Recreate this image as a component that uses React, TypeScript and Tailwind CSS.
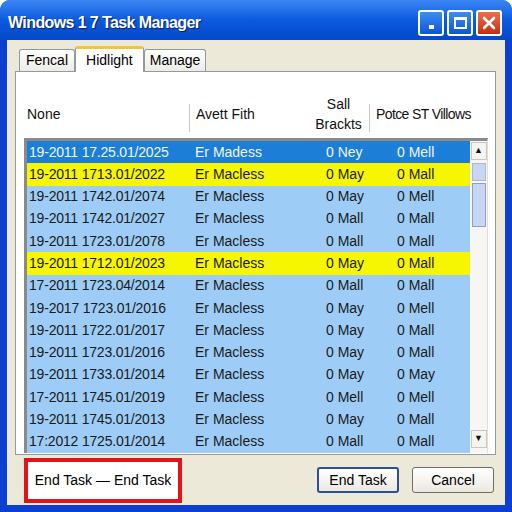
import React from "react"

const rows = [
    { a: "19-2011 17.25.01/2025", c: "0 Ney", d: "0 Mell", kind: "sel" },
    { a: "19-2011 1713.01/2022", c: "0 May", d: "0 Mall", kind: "hi" },
    { a: "19-2011 1742.01/2074", c: "0 May", d: "0 Mell", kind: "" },
    { a: "19-2011 1742.01/2027", c: "0 Mall", d: "0 Mall", kind: "" },
    { a: "19-2011 1723.01/2078", c: "0 Mall", d: "0 Mall", kind: "" },
    { a: "19-2011 1712.01/2023", c: "0 May", d: "0 Mall", kind: "hi" },
    { a: "17-2011 1723.04/2014", c: "0 Mall", d: "0 Mall", kind: "" },
    { a: "19-2017 1723.01/2016", c: "0 May", d: "0 Mell", kind: "" },
    { a: "19-2011 1722.01/2017", c: "0 May", d: "0 Mall", kind: "" },
    { a: "19-2011 1723.01/2016", c: "0 May", d: "0 Mall", kind: "" },
    { a: "19-2011 1733.01/2014", c: "0 May", d: "0 May", kind: "" },
    { a: "17-2011 1745.01/2019", c: "0 Mell", d: "0 Mell", kind: "" },
    { a: "19-2011 1745.01/2013", c: "0 May", d: "0 Mall", kind: "" },
    { a: "17:2012 1725.01/2014", c: "0 Mall", d: "0 Mall", kind: "" },
]

export default function App() {
    return (
        <div className="w-[512px] h-[512px] bg-[#0a3fd0] rounded-t-[10px] flex flex-col overflow-hidden font-['Liberation_Sans',Arial,sans-serif]">
            {/* title bar */}
            <div className="h-[40px] flex items-center pl-[8px] pr-[10px] pt-[6px] bg-gradient-to-b from-[#3a86f4] via-[#0a5ae0] to-[#0648c8]">
                <span className="text-white font-bold text-[16px] tracking-[-0.6px] [text-shadow:1px_1px_1px_#0a1f60] flex-1">Windows 1 7 Task Manager</span>
                <div className="flex gap-[3px]">
                    <div className="w-[26px] h-[26px] rounded-[3px] border-2 border-white bg-gradient-to-b from-[#3d8cf5] to-[#0d55d6] flex items-end justify-center pb-[5px]">
                        <div className="w-[5px] h-[4px] bg-white" />
                    </div>
                    <div className="w-[26px] h-[26px] rounded-[3px] border-2 border-white bg-gradient-to-b from-[#3d8cf5] to-[#0d55d6] flex items-center justify-center">
                        <div className="w-[13px] h-[12px] border-2 border-white border-t-[3px]" />
                    </div>
                    <div className="w-[26px] h-[26px] rounded-[3px] border-2 border-white bg-gradient-to-b from-[#e8704f] to-[#c42b10] flex items-center justify-center">
                        <svg width="14" height="14" viewBox="0 0 14 14"><path d="M2 2 L12 12 M12 2 L2 12" stroke="white" strokeWidth="2.6" strokeLinecap="round" /></svg>
                    </div>
                </div>
            </div>
            {/* client */}
            <div className="flex-1 mx-[7px] mb-[7px] bg-[#ece9d8] flex flex-col px-[8px] pt-[5px]">
                <div className="flex items-end h-[26px] pl-[4px] text-[14px] text-black">
                    <div className="h-[22px] px-[6px] flex items-center border border-b-0 border-[#919b9c] rounded-t-[3px] bg-gradient-to-b from-white to-[#ecebe6]">Fencal</div>
                    <div className="h-[26px] px-[10px] flex items-center border border-b-0 border-[#919b9c] border-t-[3px] border-t-[#f7c04a] rounded-t-[3px] bg-white -mb-[1px] relative">Hidlight</div>
                    <div className="h-[22px] px-[5px] flex items-center border border-b-0 border-[#919b9c] rounded-t-[3px] bg-gradient-to-b from-white to-[#ecebe6]">Manage</div>
                </div>
                <div className="w-[481px] h-[384px] bg-white border border-[#919b9c] flex flex-col pl-[8px] pr-[7px] text-[14px] text-[#111]">
                    {/* header */}
                    <div className="h-[66px] flex items-end pb-[10px]">
                        <div className="w-[165px] pl-[3px] pb-[3px]">None</div>
                        <div className="w-px h-[28px] bg-[#c8c8c8] mb-[-4px]" />
                        <div className="w-[120px] pl-[6px] pb-[3px]">Avett Fith</div>
                        <div className="w-[57px] text-center leading-[20px] -mb-[6px]">Sall<br />Brackts</div>
                        <div className="w-px h-[28px] bg-[#c8c8c8] mb-[-4px] ml-[2px]" />
                        <div className="pl-[6px] pb-[3px] tracking-[-0.6px]">Potce ST Villows</div>
                    </div>
                    {/* list */}
                    <div className="flex h-[315px] border-t-[3px] border-l-[3px] border-[#8a8a8a] border-r border-r-[#e0ded6]">
                        <div className="w-[443px] flex flex-col">
                            {rows.map((r, i) => (
                                <div
                                    key={i}
                                    className={
                                        "h-[22.3px] flex items-center " +
                                        (r.kind === "sel"
                                            ? "bg-[#1c7ed6] text-[#f2f6ff]"
                                            : r.kind === "hi"
                                            ? "bg-[#f6f600] text-[#1a1a1a]"
                                            : "bg-[#9dcdf6] text-[#1a1a1a]")
                                    }
                                >
                                    <div className="w-[168px] pl-[2px] tracking-[-0.2px]">{r.a}</div>
                                    <div className="w-[131px]">{i === 0 ? "Er Madess" : "Er Macless"}</div>
                                    <div className="w-[71px]">{r.c}</div>
                                    <div>{r.d}</div>
                                </div>
                            ))}
                        </div>
                        <div className="flex-1 bg-[#f7f6f2] flex flex-col items-center pt-[1px] pb-[5px]">
                            <div className="w-[16px] h-[18px] border border-[#c8c8c0] bg-[#f4f4f0] flex items-center justify-center text-[9px]">▲</div>
                            <div className="w-[14px] h-[18px] mt-[3px] border border-[#a8b8d8] bg-[#c8d6f4]" />
                            <div className="w-[14px] h-[44px] mt-[2px] border border-[#8ca0cc] bg-[#c8d6f4]" />
                            <div className="flex-1" />
                            <div className="w-[16px] h-[18px] border border-[#c8c8c0] bg-[#f4f4f0] flex items-center justify-center text-[9px]">▼</div>
                        </div>
                    </div>
                </div>
                {/* bottom */}
                <div className="flex-1 flex items-center">
                    <div className="ml-[9px] w-[158px] h-[45px] border-4 border-[#e0141a] bg-white flex items-center justify-center text-[14px] text-black">End Task — End Task</div>
                    <div className="flex-1" />
                    <button className="w-[82px] h-[26px] rounded-[3px] border-2 border-[#2a4f9c] bg-gradient-to-b from-white to-[#ebe9df] text-[14px] text-black">End Task</button>
                    <button className="ml-[13px] mr-[3px] w-[82px] h-[26px] rounded-[3px] border border-[#6f6d61] bg-gradient-to-b from-white to-[#ebe9df] text-[14px] text-black">Cancel</button>
                </div>
            </div>
        </div>
    )
}
